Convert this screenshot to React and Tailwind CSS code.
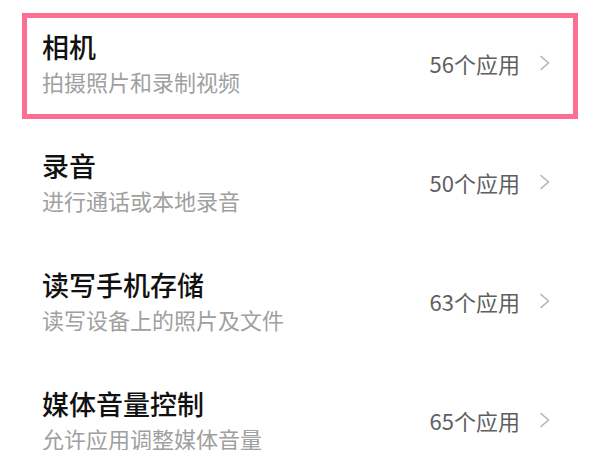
import React from "react";

const rows = [
  { title: "相机", sub: "拍摄照片和录制视频", count: "56个应用", active: true },
  { title: "录音", sub: "进行通话或本地录音", count: "50个应用" },
  { title: "读写手机存储", sub: "读写设备上的照片及文件", count: "63个应用" },
  { title: "媒体音量控制", sub: "允许应用调整媒体音量", count: "65个应用" },
];

function Chevron() {
  return (
    <svg width="12" height="16" viewBox="0 0 12 16" fill="none" className="shrink-0">
      <path d="M2 1.5 L9.5 8 L2 14.5" stroke="#b3b3b3" strokeWidth="1.6" strokeLinecap="round" strokeLinejoin="round" />
    </svg>
  );
}

export default function App() {
  return (
    <div
      className="w-[600px] h-[450px] bg-white overflow-hidden px-[22px] pt-[13px] flex flex-col gap-[13px]"
      style={{ fontFamily: '"Noto Sans CJK SC", "Noto Sans", sans-serif' }}
    >
      {rows.map((r) => (
        <div
          key={r.title}
          className={`h-[106px] shrink-0 flex items-center pl-[15px] pr-[22px] pb-[8px] border-[5px] ${
            r.active ? "border-[#ff6d92]" : "border-transparent"
          } w-[556px]`}
        >
          <div className="flex-1 flex flex-col gap-[5px]">
            <div className="text-[27px] leading-[32px] font-medium text-[#111]">{r.title}</div>
            <div className="text-[22px] leading-[26px] text-[#a0a0a0]">{r.sub}</div>
          </div>
          <div className="flex items-center gap-[19px] pt-[2px]">
            <span className="text-[22px] text-[#5f5f5f]">{r.count}</span>
            <Chevron />
          </div>
        </div>
      ))}
    </div>
  );
}
